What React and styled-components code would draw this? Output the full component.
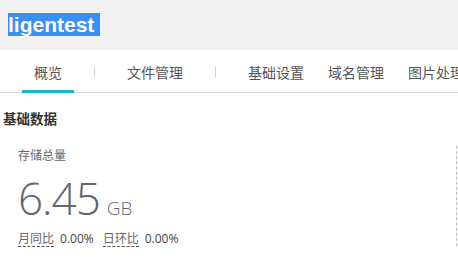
import React from 'react';
import styled, { createGlobalStyle } from 'styled-components';

const Global = createGlobalStyle`
  html, body {
    margin: 0;
    padding: 0;
    background: #fff;
    font-family: "Liberation Sans", "Noto Sans CJK SC", sans-serif;
    overflow: hidden;
  }
`;

const tabs = [
  { label: '概览', active: true, sep: true },
  { label: '文件管理', sep: true },
  { label: '基础设置' },
  { label: '域名管理' },
  { label: '图片处理' },
];

const App = () => (
  <Page>
    <Global />
    <Header>
      <Title>ligentest&nbsp;</Title>
    </Header>
    <TabBar>
      {tabs.map((t) => (
        <React.Fragment key={t.label}>
          <Tab $active={t.active}>{t.label}</Tab>
          {t.sep && <Sep />}
        </React.Fragment>
      ))}
    </TabBar>
    <SectionTitle>基础数据</SectionTitle>
    <Card>
      <Label>存储总量</Label>
      <Value>
        6.45<Unit>GB</Unit>
      </Value>
      <Compare>
        <Ratio>月同比</Ratio>
        <Pct>0.00%</Pct>
        <Ratio>日环比</Ratio>
        <Pct>0.00%</Pct>
      </Compare>
    </Card>
  </Page>
);

export default App;

const Page = styled.div`
  width: 458px;
  height: 273px;
  overflow: hidden;
`;

const Header = styled.div`
  height: 50px;
  background: #f2f2f2;
  display: flex;
  align-items: center;
  padding-left: 8px;
  box-sizing: border-box;
`;

const Title = styled.span`
  font-family: "Liberation Sans", "Noto Sans", sans-serif;
  font-weight: 700;
  font-size: 21px;
  line-height: 23px;
  color: #fff;
  background: #3a8ff3;
  margin-top: -2px;
`;

const TabBar = styled.div`
  height: 42px;
  border-bottom: 1px solid #dcdcdc;
  display: flex;
  align-items: stretch;
  padding-left: 22px;
  box-sizing: content-box;
  white-space: nowrap;
`;

const Tab = styled.div`
  position: relative;
  padding: 0 12px;
  font-size: 14px;
  color: #555;
  font-family: "Noto Sans CJK SC", sans-serif;
  display: flex;
  align-items: center;
  padding-top: 2px;
  flex-shrink: 0;
  &::after {
    content: '';
    display: ${(p) => (p.$active ? 'block' : 'none')};
    position: absolute;
    left: 0;
    right: 0;
    bottom: -1px;
    height: 3px;
    background: #1cb5c9;
  }
`;

const Sep = styled.div`
  width: 1px;
  height: 10px;
  background: #d0d0d0;
  align-self: center;
  margin: 2px 20px 0;
  flex-shrink: 0;
`;

const SectionTitle = styled.div`
  font-family: "Noto Sans CJK SC", sans-serif;
  font-weight: 700;
  font-size: 13.5px;
  color: #333;
  padding-left: 3px;
  margin-top: 15px;
  line-height: 20px;
`;

const Card = styled.div`
  margin-top: 23px;
  margin-right: 1px;
  padding-left: 18px;
  height: 100px;
  border-right: 1px dashed #bbb;
`;

const Label = styled.div`
  font-family: "Noto Sans CJK SC", sans-serif;
  font-size: 12px;
  color: #666;
  line-height: 18px;
  margin-top: -5px;
`;

const Value = styled.div`
  font-family: "Open Sans", "Noto Sans", sans-serif;
  font-weight: 300;
  font-size: 44px;
  line-height: 50px;
  color: #5f6770;
  margin-top: 9px;
  letter-spacing: -1px;
`;

const Unit = styled.span`
  font-size: 19px;
  margin-left: 7px;
  letter-spacing: 0;
`;

const Compare = styled.div`
  display: flex;
  align-items: center;
  gap: 6px;
  margin-top: -3px;
  font-size: 12px;
  color: #444;
`;

const Ratio = styled.span`
  font-family: "Noto Sans CJK SC", sans-serif;
  color: #666;
  border-bottom: 1px dashed #555;
  line-height: 16px;
`;

const Pct = styled.span`
  font-family: "Open Sans", "Noto Sans", sans-serif;
  color: #444;
  margin-right: 3px;
`;
